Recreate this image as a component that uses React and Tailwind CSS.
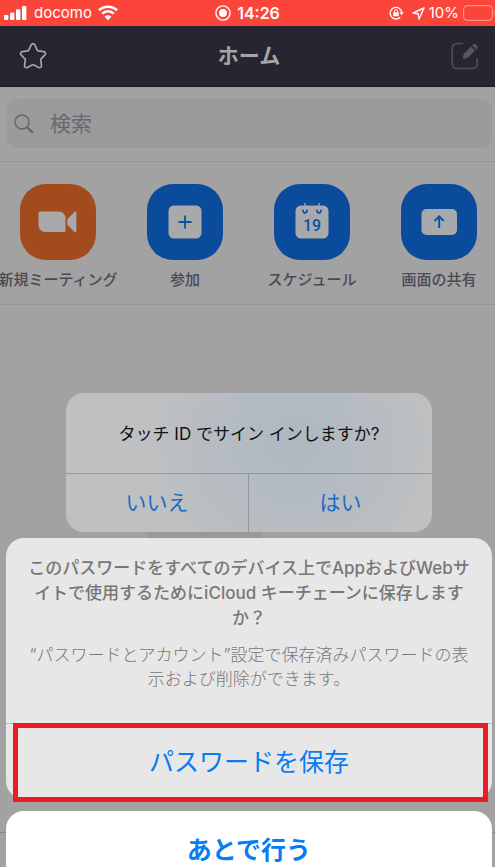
import React, { useState } from "react";

const SignalIcon = () => (
  <svg width="24" height="16" viewBox="0 0 24 16" fill="#fff" aria-hidden="true">
    <rect x="0" y="10" width="4.4" height="5" rx="1.2" />
    <rect x="6" y="7.5" width="4.4" height="7.5" rx="1.2" />
    <rect x="12" y="4.2" width="4.4" height="10.8" rx="1.2" />
    <rect x="18" y="1" width="4.4" height="14" rx="1.2" />
  </svg>
);

const WifiIcon = () => (
  <svg width="20" height="16" viewBox="0 0 20 16" fill="none" stroke="#fff" aria-hidden="true">
    <path d="M1 5.2C6 .6 14 .6 19 5.2" strokeWidth="2.6" />
    <path d="M4.2 8.6c3.4-3 8.2-3 11.6 0" strokeWidth="2.5" />
    <path d="M6.6 11.7c2-1.8 4.8-1.8 6.8 0L10 15.2z" fill="#fff" stroke="none" />
  </svg>
);

const RecordIcon = () => (
  <svg width="16" height="16" viewBox="0 0 16 16" aria-hidden="true">
    <circle cx="8" cy="8" r="7.1" fill="none" stroke="#fff" strokeWidth="1.4" />
    <circle cx="8" cy="8" r="3.9" fill="#fff" />
  </svg>
);

const RotationLockIcon = () => (
  <svg width="15" height="14" viewBox="0 0 15 14" aria-hidden="true">
    <path d="M11.2 11.2A5.8 5.8 0 1 1 12.8 6.6" fill="none" stroke="#fff" strokeWidth="1.3" />
    <path d="M10.4 6.3h4.4l-2.2 3z" fill="#fff" />
    <rect x="4.3" y="6.3" width="5.4" height="4" rx=".5" fill="#fff" />
    <path d="M5.4 6.5V5.3a1.6 1.6 0 0 1 3.2 0v1.2" fill="none" stroke="#fff" strokeWidth="1" />
  </svg>
);

const LocationIcon = () => (
  <svg width="13" height="13" viewBox="0 0 13 13" aria-hidden="true">
    <path d="M12 1L1 6l5.2.7L7 12z" fill="none" stroke="#fff" strokeWidth="1.4" strokeLinejoin="round" />
  </svg>
);

const BatteryIcon = () => (
  <svg width="32" height="16" viewBox="0 0 32 16" aria-hidden="true">
    <rect x=".6" y=".6" width="28.8" height="14.8" rx="4" fill="none" stroke="#fd8f88" strokeWidth="1.2" />
    <path d="M31 5.5c1.2.6 1.2 4.4 0 5z" fill="#fd8f88" />
  </svg>
);

const StarIcon = () => (
  <svg width="28" height="28" viewBox="0 0 28 28" aria-hidden="true">
    <path
      d="M12.3 2.7c.7-1.5 2.7-1.5 3.4 0l2.4 5.2c.2.5.6.8 1.1.9l5.6.9c1.7.3 2.2 2 1.1 3.2l-3.8 3.9c-.4.4-.5.9-.4 1.4l.8 5.4c.2 1.6-1.4 2.6-2.8 1.9L15 23c-.6-.3-1.3-.3-1.9 0l-4.8 2.5c-1.4.7-3-.3-2.8-1.9l.8-5.4c.1-.5-.1-1-.4-1.4l-3.8-3.9C1 11.7 1.6 10 3.2 9.7l5.6-.9c.5-.1.9-.4 1.1-.9z"
      fill="none"
      stroke="#a6a5a5"
      strokeWidth="1.7"
      strokeLinejoin="round"
    />
  </svg>
);

const EditIcon = () => (
  <svg width="28" height="28" viewBox="0 0 28 28" aria-hidden="true">
    <path
      d="M11.5 1.5H6A4.8 4.8 0 0 0 1.2 6.3v15.4A4.8 4.8 0 0 0 6 26.5h15.4a4.8 4.8 0 0 0 4.8-4.8V17"
      fill="none"
      stroke="#504e58"
      strokeWidth="1.7"
      strokeLinecap="round"
    />
    <path d="M12.8 11.8l7.3-7.3 4 4-7.3 7.3-4 .9c-.6.1-1-.2-.9-.9z" fill="#57555f" />
    <path d="M21.1 3.5l1.4-1.4c.5-.5 1.2-.5 1.7 0l2.3 2.3c.5.5.5 1.2 0 1.700L25.100 7.500z" fill="#57555f" />
  </svg>
);

const SearchIcon = () => (
  <svg width="20" height="20" viewBox="0 0 20 20" fill="none" stroke="#66666a" aria-hidden="true">
    <circle cx="8" cy="8" r="7" strokeWidth="1.5" />
    <path d="M13 13l6 6" strokeWidth="2.2" />
  </svg>
);

const VideoGlyph = () => (
  <svg width="76" height="76" viewBox="0 0 76 76" fill="#a8a9aa" aria-hidden="true">
    <path d="M20 27.5H39a6.5 6.5 0 0 1 6.5 6.5v12.5a1.5 1.5 0 0 1-1.5 1.5H25a6.5 6.5 0 0 1-6.5-6.5V29a1.5 1.5 0 0 1 1.5-1.5z" />
    <path d="M48 34.5l6.5-6.5c.8-.8 1.9-.4 1.9.7v18.6c0 1.1-1.1 1.5-1.9.7L48 41.5c-.6-.7-.7-1-.7-1.8v-3.4c0-.8.1-1.2.7-1.8z" />
  </svg>
);

const PlusGlyph = () => (
  <svg width="76" height="76" viewBox="0 0 76 76" aria-hidden="true">
    <rect x="21.5" y="21.5" width="33" height="33" rx="5.5" fill="#a8a9aa" />
    <path d="M38 31.5v13M31.5 38h13" stroke="#0b51a5" strokeWidth="1.8" />
  </svg>
);

const CalendarGlyph = () => (
  <svg width="76" height="76" viewBox="0 0 76 76" aria-hidden="true">
    <rect x="21.5" y="21.5" width="33" height="33" rx="5.5" fill="#a8a9aa" />
    <path d="M31 19v6M45 19v6" stroke="#a8a9aa" strokeWidth="1.4" />
    <path
      d="M29.3 25.8a2 2 0 1 0 3.4 0M43.3 25.8a2 2 0 1 0 3.4 0"
      fill="none"
      stroke="#0b51a5"
      strokeWidth="1.9"
    />
    <text
      x="38"
      y="46.5"
      textAnchor="middle"
      fontFamily="Roboto, sans-serif"
      fontSize="16"
      fontWeight="500"
      fill="#0b51a5"
    >
      19
    </text>
  </svg>
);

const ShareGlyph = () => (
  <svg width="76" height="76" viewBox="0 0 76 76" aria-hidden="true">
    <rect x="20.5" y="25" width="35.5" height="26" rx="5" fill="#a8a9aa" />
    <path
      d="M38.2 44V32.5M33.6 37l4.6-4.6 4.6 4.6"
      fill="none"
      stroke="#0b51a5"
      strokeWidth="1.9"
    />
  </svg>
);

const actions = [
  { label: "新規ミーティング", Glyph: VideoGlyph, color: "bg-[#a44b1d]" },
  { label: "参加", Glyph: PlusGlyph, color: "bg-[#0a4b9c]" },
  { label: "スケジュール", Glyph: CalendarGlyph, color: "bg-[#0a4b9c]" },
  { label: "画面の共有", Glyph: ShareGlyph, color: "bg-[#0a4b9c]" },
];

const StatusBar = () => (
  <div className="grid h-[26px] grid-cols-[1fr_auto_1fr] items-center bg-[#fb443a] text-white">
    <div className="flex items-center gap-[6px] pl-1">
      <SignalIcon />
      <span className="text-[15px] leading-5">docomo</span>
      <WifiIcon />
    </div>
    <div className="flex items-center gap-[6px]">
      <RecordIcon />
      <span className="text-base leading-5 font-semibold">14:26</span>
    </div>
    <div className="flex items-center justify-end">
      <div className="flex items-center gap-2">
        <RotationLockIcon />
        <LocationIcon />
      </div>
      <span className="ml-1 text-[15px] leading-5">10%</span>
      <span className="ml-1">
        <BatteryIcon />
      </span>
    </div>
  </div>
);

const Home = () => {
  const [query, setQuery] = useState("");

  return (
    <main className="flex grow flex-col">
      <header className="flex h-[61px] items-center justify-between border-b border-[#1d1b26] bg-[#272532] pr-4 pl-[19px]">
        <button aria-label="お気に入り">
          <StarIcon />
        </button>
        <h1 className="text-[21px] leading-8 font-bold text-[#a6a5a5]">ホーム</h1>
        <button aria-label="編集">
          <EditIcon />
        </button>
      </header>

      <div className="border-b border-[#959596] pt-3 pr-[3px] pb-[13px] pl-[6px]">
        <label className="flex h-[49px] items-center gap-4 rounded-xl bg-[#9b9b9e] pl-2">
          <SearchIcon />
          <input
            type="search"
            aria-label="検索"
            placeholder="検索"
            value={query}
            onChange={(e) => setQuery(e.target.value)}
            className="min-w-0 grow bg-transparent text-[21px] leading-8 text-[#333] outline-none placeholder:text-[#68686c]"
          />
        </label>
      </div>

      <nav className="flex justify-between border-b border-[#959596] pt-[22px] pr-[18px] pb-3 pl-5">
        {actions.map(({ label, Glyph, color }) => (
          <button key={label} className="flex w-[76px] flex-col items-center gap-2">
            <span className={`rounded-[26px] ${color}`}>
              <Glyph />
            </span>
            <span className="text-[15px] leading-6 font-medium whitespace-nowrap text-[#4b4953]">
              {label}
            </span>
          </button>
        ))}
      </nav>

      {/* blank calendar illustration, mostly hidden by the dialogs */}
      <div className="mx-auto mt-40 mb-auto h-20 w-[115px] -translate-x-[43px] bg-[#999]" />
      <div className="h-[35px] shrink-0 border-t border-[#88888a]" />
    </main>
  );
};

const TouchIdAlert = () => (
  <section
    role="alertdialog"
    aria-labelledby="touch-id-title"
    className="mr-[63px] ml-[66px] overflow-hidden rounded-[18px] bg-[#c0c1c1] bg-[radial-gradient(circle_at_62%_35%,#aeb8c2_0%,#b4bbc2_25%,#bfc0c1_60%)]"
  >
    <h2
      id="touch-id-title"
      className="border-b border-[#94989d] pt-[29px] pb-[27px] text-center text-[17px] leading-6 font-normal text-[#111]"
    >
      タッチ ID でサイン インしますか?
    </h2>
    <div className="grid h-[58px] grid-cols-2 text-[21px] text-[#1c69c4]">
      <button className="border-r border-[#94989d]">いいえ</button>
      <button>はい</button>
    </div>
  </section>
);

const PasswordSheet = () => (
  <section
    role="dialog"
    aria-labelledby="password-title"
    className="mt-[6px] mr-[3px] ml-[6px] flex flex-col gap-3"
  >
    <div className="rounded-[18px] bg-[#e7e7e7]">
      <div className="px-4 pt-[18px] pb-8 text-center text-[17px] text-[#858585]">
        <h2 id="password-title" className="leading-[25px] font-medium text-[#777]">
          このパスワードをすべてのデバイス上でAppおよびWebサ
          <br />
          イトで使用するためにiCloud キーチェーンに保存します
          <br />
          か？
        </h2>
        <p className="mt-3 leading-6 font-light text-[#777]">
          “パスワードとアカウント”設定で保存済みパスワードの表
          <br />
          示および削除ができます。
        </p>
      </div>
      <div className="relative border-t border-[#bcbcbc]">
        <button className="h-[75px] w-full pt-[2px] text-[25px] text-[#087cf5]">
          パスワードを保存
        </button>
        <span className="pointer-events-none absolute -top-px right-1 -bottom-[3px] left-[7px] border-5 border-[#ed1c24]" />
      </div>
    </div>
    <button className="h-[77px] rounded-[18px] bg-white pt-[2px] text-[25px] font-bold text-[#087cf5]">
      あとで行う
    </button>
  </section>
);

const App = () => (
  <div className="relative flex h-screen flex-col overflow-hidden bg-[#a2a2a2] font-[Inter,'Noto_Sans_CJK_JP',sans-serif]">
    <StatusBar />
    <Home />
    <div className="absolute inset-x-0 top-[393px]">
      <TouchIdAlert />
      <PasswordSheet />
    </div>
  </div>
);

export default App;
